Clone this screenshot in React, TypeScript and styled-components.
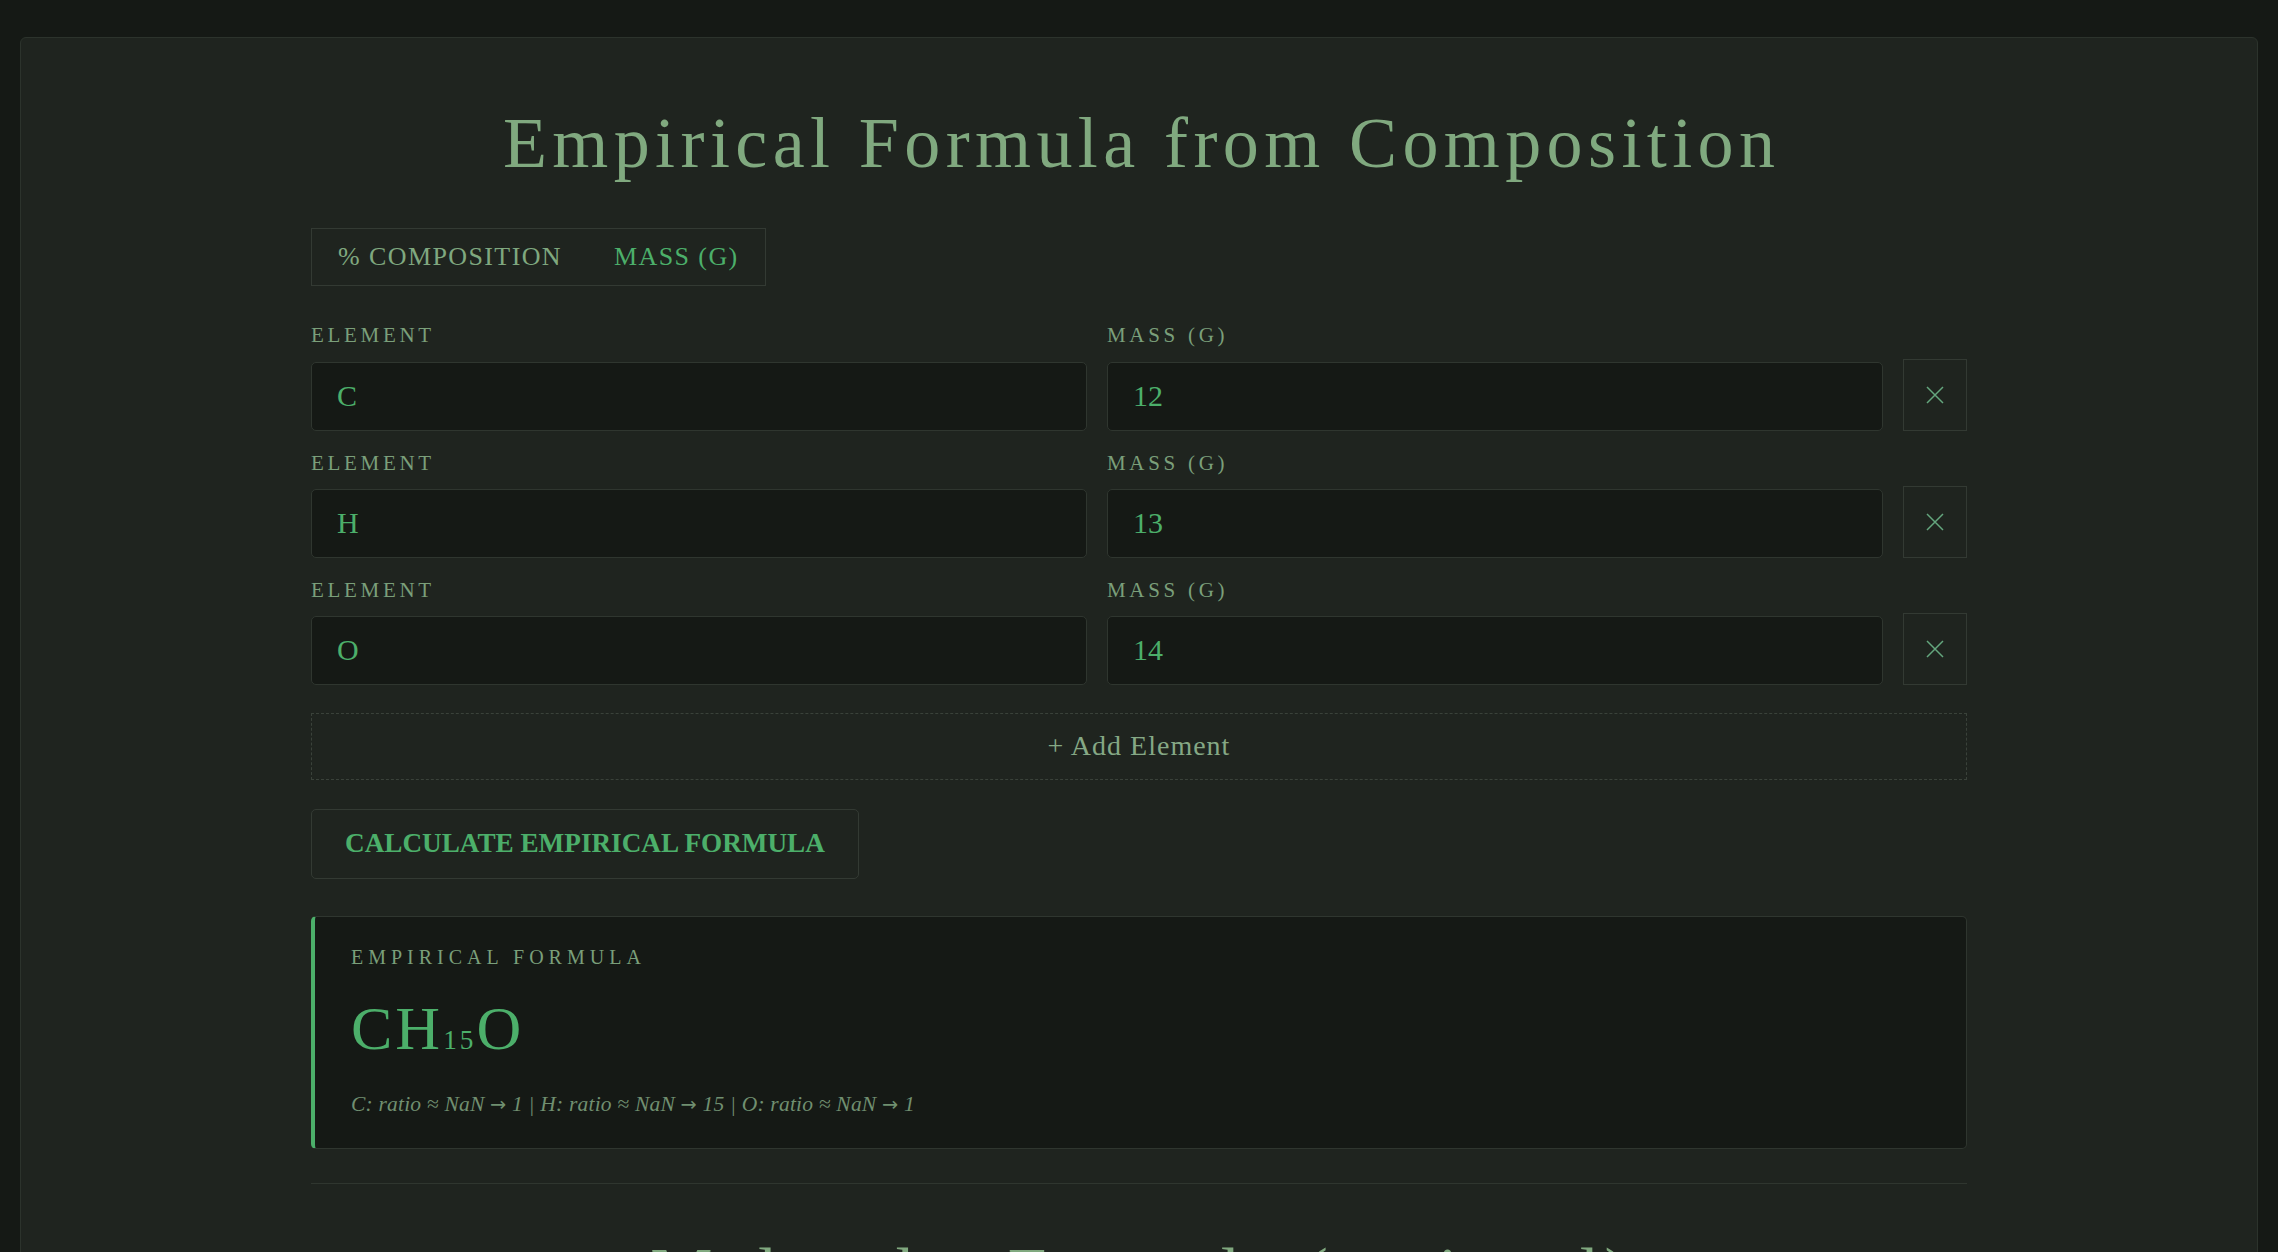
import React from "react";
import styled, { createGlobalStyle } from "styled-components";

const GlobalStyle = createGlobalStyle`
  * {
    box-sizing: border-box;
  }
  html,
  body {
    margin: 0;
    padding: 0;
    background: #151915;
  }
  body {
    font-family: "Liberation Serif", "DejaVu Serif", serif;
    color: #7fa87f;
  }
`;

const rows = [
  { element: "C", mass: "12" },
  { element: "H", mass: "13" },
  { element: "O", mass: "14" },
];

const ratios = [
  { el: "C", n: "1" },
  { el: "H", n: "15" },
  { el: "O", n: "1" },
];

const CloseIcon: React.FC = () => (
  <svg width="18" height="18" viewBox="0 0 18 18" fill="none">
    <path d="M1 1 L17 17 M17 1 L1 17" stroke="currentColor" strokeWidth="1.5" />
  </svg>
);

const App: React.FC = () => {
  return (
    <>
      <GlobalStyle />
      <Page>
        <Card>
          <Inner>
            <Title>Empirical Formula from Composition</Title>

            <Tabs>
              <Tab>% Composition</Tab>
              <Tab $active>Mass (g)</Tab>
            </Tabs>

            <Rows>
              {rows.map((r) => (
                <Row key={r.element}>
                  <Field>
                    <FieldLabel>Element</FieldLabel>
                    <Input defaultValue={r.element} />
                  </Field>
                  <Field>
                    <FieldLabel>Mass (g)</FieldLabel>
                    <Input defaultValue={r.mass} />
                  </Field>
                  <RemoveButton aria-label="remove">
                    <CloseIcon />
                  </RemoveButton>
                </Row>
              ))}
            </Rows>

            <AddButton>+ Add Element</AddButton>

            <CalcButton>Calculate Empirical Formula</CalcButton>

            <Result>
              <ResultLabel>Empirical Formula</ResultLabel>
              <Formula>
                CH<Sub>15</Sub>O
              </Formula>
              <Ratio>
                {ratios.map((r, i) => (
                  <React.Fragment key={r.el}>
                    {i > 0 && " | "}
                    {r.el}: ratio ≈ NaN <Arrow>→</Arrow> {r.n}
                  </React.Fragment>
                ))}
              </Ratio>
            </Result>

            <Divider />

            <SubTitle>Molecular Formula (optional)</SubTitle>

            <Row>
              <Field>
                <FieldLabel>Molar mass (g/mol)</FieldLabel>
                <Input placeholder="e.g. 180.16" />
              </Field>
            </Row>
          </Inner>
        </Card>
      </Page>
    </>
  );
};

const Page = styled.div`
  padding: 37px 20px 40px;
`;

const Card = styled.main`
  background: #1f241f;
  border: 1px solid #2c332c;
  border-radius: 6px;
  padding: 62px 40px 120px;
`;

const Inner = styled.div`
  max-width: 1656px;
  margin: 0 auto;
`;

const Title = styled.h1`
  margin: 0 0 42px;
  font-size: 72px;
  font-weight: 400;
  line-height: 1.2;
  letter-spacing: 0.075em;
  text-indent: 0.075em;
  text-align: center;
  color: #80a97f;
`;

const SubTitle = styled(Title).attrs({ as: "h2" })`
  margin: 47px 0 40px;
  font-size: 70px;
`;

const Tabs = styled.div`
  display: flex;
  width: fit-content;
  border: 1px solid #333a33;
  margin-bottom: 37px;
`;

const Tab = styled.button<{ $active?: boolean }>`
  height: 56px;
  padding: 0 26px;
  background: transparent;
  border: 0;
  font-family: inherit;
  font-size: 26px;
  line-height: 56px;
  letter-spacing: 1.4px;
  text-transform: uppercase;
  color: ${(p) => (p.$active ? "#4caf6a" : "#7fa87f")};
  cursor: pointer;
`;

const Rows = styled.div`
  display: flex;
  flex-direction: column;
  gap: 20px;
`;

const Row = styled.div`
  display: grid;
  grid-template-columns: 1fr 1fr 64px;
  column-gap: 20px;
  align-items: end;
`;

const Field = styled.label`
  display: flex;
  flex-direction: column;
  gap: 13px;
`;

const FieldLabel = styled.span`
  font-size: 21px;
  line-height: 1.2;
  letter-spacing: 3.7px;
  text-transform: uppercase;
  color: #7a9f7a;
`;

const Input = styled.input`
  width: 100%;
  height: 69px;
  padding: 0 25px;
  background: #151915;
  border: 1px solid #2f362f;
  border-radius: 5px;
  font-family: inherit;
  font-size: 30px;
  color: #4caf6a;
  outline: none;

  &::placeholder {
    color: #4d644d;
  }
`;

const RemoveButton = styled.button`
  height: 72px;
  padding: 0;
  display: flex;
  align-items: center;
  justify-content: center;
  background: transparent;
  border: 1px solid #333a33;
  color: #64a67e;
  cursor: pointer;
`;

const AddButton = styled.button`
  display: block;
  width: 100%;
  height: 67px;
  margin-top: 28px;
  background: transparent;
  border: 1px dashed #3a423a;
  font-family: inherit;
  font-size: 28px;
  letter-spacing: 1px;
  color: #85a885;
  cursor: pointer;
`;

const CalcButton = styled.button`
  display: block;
  height: 70px;
  margin-top: 29px;
  padding: 0 33px;
  background: transparent;
  border: 1px solid #333a33;
  border-radius: 5px;
  font-family: inherit;
  font-size: 27.2px;
  font-weight: 700;
  text-transform: uppercase;
  color: #4caf6a;
  cursor: pointer;
`;

const Result = styled.section`
  margin-top: 37px;
  padding: 28px 36px 29px;
  background: #151915;
  border: 1px solid #2f362f;
  border-left: 4px solid #4caf6a;
  border-radius: 5px;
`;

const ResultLabel = styled.div`
  font-size: 20px;
  line-height: 1.2;
  letter-spacing: 5px;
  text-transform: uppercase;
  color: #7a9f7a;
`;

const Formula = styled.div`
  margin-top: 22px;
  font-size: 62px;
  line-height: 1.2;
  letter-spacing: 3px;
  color: #4caf6a;
`;

const Sub = styled.span`
  font-size: 0.44em;
  letter-spacing: 3px;
`;

const Ratio = styled.div`
  margin-top: 24px;
  font-size: 21.5px;
  font-style: italic;
  line-height: 1.4;
  letter-spacing: 0.2px;
  color: #708f70;
`;

const Arrow = styled.span`
  font-family: "DejaVu Sans", sans-serif;
  font-style: normal;
  font-size: 0.9em;
`;

const Divider = styled.hr`
  margin: 34px 0 0;
  border: 0;
  border-top: 1px solid #2f362f;
`;

export default App;
